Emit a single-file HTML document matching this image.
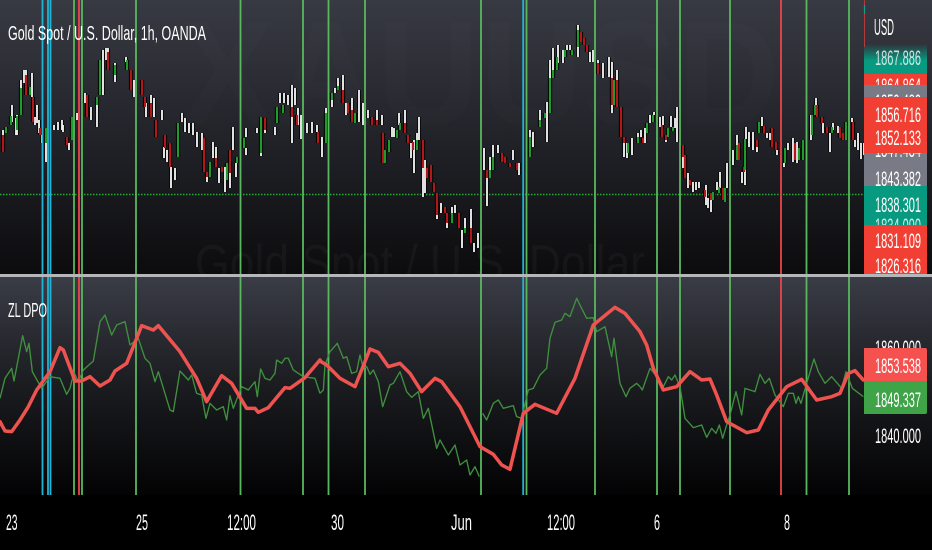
<!DOCTYPE html>
<html><head><meta charset="utf-8"><style>
html,body{margin:0;padding:0;background:#000;width:932px;height:550px;overflow:hidden}
svg{display:block;filter:blur(.35px)}
text{font-family:"Liberation Sans",sans-serif;fill:#fff}
.c{fill:none;stroke-linecap:butt}
</style></head><body>
<svg width="932" height="550" viewBox="0 0 932 550" xmlns="http://www.w3.org/2000/svg">
<defs>
<linearGradient id="g1" x1="0" y1="0" x2="0" y2="1"><stop offset="0" stop-color="#383a43"/><stop offset=".5" stop-color="#222329"/><stop offset="1" stop-color="#0c0c0e"/></linearGradient>
<linearGradient id="g2" x1="0" y1="0" x2="0" y2="1"><stop offset="0" stop-color="#3a3c46"/><stop offset=".5" stop-color="#1b1c20"/><stop offset="1" stop-color="#030304"/></linearGradient>
<linearGradient id="fade" x1="0" y1="0" x2="0" y2="1"><stop offset="0" stop-color="#089981" stop-opacity="0"/><stop offset=".55" stop-color="#089981"/><stop offset="1" stop-color="#089981"/></linearGradient>
<path id="wk" d="M3 130V137M12 105V122M16 118V135M17 115V135M21 80V88M24 70V83M26 70V75M32 73V97M37 105V123M35 117V125M39 120V133M42 135V143M46 143V162M54 125V130M58 122V130M62 120V130M63 125V132M69 143V150M77 113V120M85 93V103M91 107V120M97 97V127M103 50V95M106 48V60M108 48V53M115 63V82M126 57V62M134 80V97M146 103V117M151 95V103M154 98V117M162 110V120M164 147V158M167 150V162M171 167V188M175 168V180M182 113V122M185 118V132M189 123V133M193 123V135M197 132V147M202 133V150M207 175V182M213 142V158M216 147V158M219 168V183M225 167V192M230 173V188M233 127V150M236 163V177M246 128V137M246 148V155M257 128V133M261 150V156M265 127V133M275 127V135M280 93V103M284 93V103M288 95V105M292 85V143M295 88V105M298 108V125M301 115V139M307 123V133M312 122V133M317 125V132M322 137V157M326 108V113M332 100V107M335 88V93M338 78V86M343 75V90M346 103V115M352 98V113M359 90V122M363 103V125M368 110V118M377 110V120M382 115V125M392 127V137M394 128V137M399 113V125M405 110V123M411 143V158M414 140V173M417 133V150M419 117V140M423 168V197M425 160V193M437 215V219M441 203V213M447 223V228M452 207V213M455 205V213M462 230V248M465 218V228M471 209V228M474 243V252M478 233V248M484 148V170M487 178V206M490 157V170M493 145V157M498 145V153M513 150V160M519 163V175M530 130V137M533 132V147M540 110V120M547 102V142M550 60V78M553 48V70M558 45V63M563 50V63M567 45V50M570 45V50M578 47V57M578 25V30M590 52V62M593 50V62M598 60V63M603 63V78M609 57V77M612 62V78M617 70V80M612 105V113M624 143V157M627 143V158M632 138V155M638 133V137M641 130V137M645 128V143M650 115V123M654 112V115M660 117V127M663 116V125M666 140V142M671 116V127M675 118V128M677 107V142M683 157V168M688 173V188M693 182V192M696 182V190M699 182V188M706 185V205M708 198V208M711 200V212M717 182V190M720 172V188M727 163V188M733 150V165M737 135V145M742 172V183M745 170V185M746 127V139M749 132V147M753 132V150M757 147V152M762 117V126M767 133V138M770 133V140M777 150V155M784 163V167M788 143V150M793 138V162M797 142V163M811 115V140M816 98V105M823 123V133M830 133V152M833 123V130M838 126V133M852 118V122M855 140V147M858 133V150M861 143V159M864 143V155"/>
<path id="rb" d="M3 135V152M26 75V95M33 97V122M40 128V135M67 137V145M87 95V117M108 52V70M131 70V90M142 80V95M145 97V107M151 103V117M156 120V137M165 135V148M170 143V167M204 138V172M207 172V177M216 158V167M222 167V172M230 150V173M265 118V130M292 107V117M297 115V125M318 132V143M343 90V103M348 103V113M352 110V122M372 117V125M377 120V125M383 133V163M405 123V133M408 135V143M413 142V150M423 140V168M427 168V178M431 165V182M434 183V192M437 193V215M445 207V213M447 213V223M459 213V228M471 228V243M487 170V178M502 153V162M505 157V163M510 163V167M517 163V170M581 32V42M584 38V45M587 45V52M598 63V74M612 78V105M617 80V107M621 107V137M624 137V143M643 138V143M662 125V137M666 135V140M683 145V157M685 155V178M690 180V185M705 190V197M711 193V200M723 188V200M739 143V160M744 167V172M757 140V147M764 126V133M772 128V147M776 142V150M795 143V160M817 105V117M822 117V123M827 127V133M840 127V138M843 133V140M853 122V140"/>
<path id="gb" d="M6 127V133M11 116V125M17 116V130M21 88V115M30 87V95M46 128V143M72 117V140M97 97V105M100 60V95M115 65V75M127 60V70M178 123V157M210 162V177M227 163V180M237 157V163M244 138V148M261 117V153M277 107V123M283 105V113M326 113V143M332 93V100M338 86V90M355 113V123M385 150V163M389 140V152M397 130V138M400 123V130M417 140V150M452 213V223M465 228V233M490 170V178M493 157V170M530 137V157M540 120V127M545 113V118M550 78V113M553 70V78M557 57V70M565 50V57M572 50V55M578 30V47M614 80V105M628 143V153M638 137V143M647 123V133M653 115V122M668 128V137M673 127V131M713 192V200M719 187V193M725 188V202M737 145V160M745 139V170M759 122V133M785 148V163M799 148V160M803 140V160M812 115V135M815 105V115M832 127V133M846 122V140"/>
<clipPath id="top"><rect x="0" y="0" width="864" height="274"/></clipPath>
<clipPath id="k1"><rect x="864" y="74" width="63" height="11"/></clipPath>
<clipPath id="k2"><rect x="864" y="85" width="63" height="12"/></clipPath>
<clipPath id="k3"><rect x="864" y="153" width="63" height="33"/></clipPath>
<clipPath id="k4"><rect x="864" y="218" width="63" height="7"/></clipPath>
<clipPath id="k5"><rect x="864" y="335" width="63" height="13"/></clipPath>
</defs>
<rect width="932" height="550" fill="#000"/>
<rect width="932" height="274" fill="url(#g1)"/>
<rect y="277" width="932" height="218" fill="url(#g2)"/>

<g clip-path="url(#top)">
<text x="180" y="125" font-size="150" font-weight="700" textLength="600" lengthAdjust="spacingAndGlyphs" style="fill:#fff;fill-opacity:.012">XAUUSD</text>
<text x="195" y="280" font-size="50" textLength="450" lengthAdjust="spacingAndGlyphs" style="fill:#fff;fill-opacity:.035">Gold Spot / U.S. Dollar</text>
</g>

<path d="M0 194.5H864" stroke="#22ad30" stroke-width="1.6" stroke-dasharray="1.5 1.5" fill="none"/>

<g clip-path="url(#top)">
<use href="#wk" class="c" stroke="#000" stroke-width="3.4"/>
<use href="#rb" class="c" stroke="#000" stroke-width="4.2"/>
<use href="#gb" class="c" stroke="#000" stroke-width="4.2"/>
<use href="#wk" class="c" stroke="#ececec" stroke-width="1.9"/>
<use href="#rb" class="c" stroke="#b2181b" stroke-width="2.2"/>
<use href="#gb" class="c" stroke="#1f9a2c" stroke-width="2.2"/>
</g>

<!-- vertical markers -->
<g fill="none" stroke-width="1.8">
<path stroke="#59b75d" d="M74 0V274M74 277V495M82 0V274M82 277V495M136 0V274M136 277V495M240.5 0V274M240.5 277V495M303 0V274M303 277V495M328.500 0V274M328.500 277V495M365 0V274M365 277V495M481 0V274M481 277V495M526.500 0V274M526.500 277V495M595 0V274M595 277V495M657 0V274M657 277V495M680 0V274M680 277V495M730 0V274M730 277V495M806.500 0V274M806.500 277V495M849 0V274M849 277V495"/>
<path stroke="#22b4d6" d="M42.500 0V274M42.500 277V495M48 0V274M48 277V495M50.500 0V274M50.500 277V495M523.200 0V274M523.200 277V495"/>
<path stroke="#ec4449" d="M79 0V274M79 277V495M781 0V274M781 277V495"/>
</g>

<!-- green (thin) line -->
<g fill="none" stroke="#40913f" stroke-width="4" stroke-linejoin="round">
<polyline transform="translate(0,275) scale(.3333)" points="0,370 15,310 35,280 42,318 68,182 80,230 87,205 97,290 125,340 150,305 180,310 200,358 210,340 222,292 235,320 250,285 280,258 300,140 315,120 335,180 350,150 375,140 390,210 415,190 435,250 450,265 465,320 475,290 510,405 520,410 540,288 565,315 575,300 590,355 605,360 618,430 630,385 650,405 670,395 680,435 690,362 700,400 725,335 745,345 765,320 772,365 782,282 795,310 810,315 825,295 830,255 845,265 855,250 865,250 880,285 910,305 945,310 960,355"/>
<polyline transform="translate(320,275) scale(.3333)" points="0,355 10,345 15,270 30,230 52,205 70,250 80,245 95,295 110,290 120,240 130,280 140,275 150,298 160,285 175,320 188,395 210,330 220,325 240,290 260,350 275,367 295,350 310,430 325,400 350,520 360,495 385,540 405,510 420,570 440,555 450,600 465,575 478,605"/>
<polyline transform="translate(320,275) scale(.3333)" points="488,415 500,435 520,385 535,375 550,400 580,392 590,425 605,430 625,345 640,340 660,300 680,280 690,190 705,142 725,135 735,115 750,125 770,70 800,130 820,128 830,170 855,155 875,245 882,190 900,325 918,365 930,340 950,325 960,335"/>
<polyline transform="translate(640,275) scale(.3333)" points="0,335 7,345 30,280 55,310 70,335 85,305 95,315 105,300 120,335 135,430 160,458 185,450 200,487 215,460 228,475 238,450 248,490 260,450 270,420 288,350 305,420 315,340 345,350 360,298 375,325 388,310 405,360 430,395 445,355 460,355 468,385 475,365 483,385 500,325 522,252 535,290 555,325 575,305 605,340 618,290 637,340 670,365"/>
</g>
<!-- red (thick) line -->
<g fill="none" stroke="#ef5350" stroke-width="10.500" stroke-linejoin="round" stroke-linecap="round">
<polyline transform="translate(0,275) scale(.3333)" points="0,440 15,468 35,470 60,435 85,395 110,345 150,290 180,218 190,225 225,318 245,318 270,305 300,333 330,315 345,288 380,265 425,152 460,165 475,152 540,230 590,310 620,380 665,302 695,325 740,400 765,400 775,412 805,398 855,338 870,340 915,308 960,255"/>
<polyline transform="translate(320,275) scale(.3333)" points="0,258 20,270 60,310 105,335 150,222 175,232 205,275 240,265 270,295 305,350 345,310 365,320 420,395 480,515 520,538 545,570 570,583 610,415 645,388 710,415 765,310 820,150 885,97 915,115 960,170"/>
<polyline transform="translate(640,275) scale(.3333)" points="0,170 20,210 40,280 70,345 110,335 150,290 185,315 210,312 230,360 260,440 320,473 355,465 385,405 440,335 485,313 530,375 575,365 600,355 625,295 645,287 670,315"/>
</g>

<!-- separator -->
<rect y="274" width="932" height="3" fill="#b5b7bb"/>

<!-- legends -->
<text x="8" y="40" font-size="20" textLength="198" lengthAdjust="spacingAndGlyphs">Gold Spot / U.S. Dollar, 1h, OANDA</text>
<text x="8" y="317" font-size="20" textLength="39" lengthAdjust="spacingAndGlyphs">ZL DPO</text>

<!-- price axis -->
<path d="M864.500 0V47" stroke="#b23a3c" stroke-width="1"/>
<path d="M864.500 5V14" stroke="#1c9a88" stroke-width="1.200"/>
<text x="874" y="35" font-size="23" textLength="20" lengthAdjust="spacingAndGlyphs">USD</text>
<rect x="864" y="44" width="63" height="30" fill="url(#fade)"/>
<rect x="864" y="74" width="63" height="11" fill="#f23f33"/>
<rect x="864" y="85" width="63" height="12" fill="#787b86"/>
<rect x="864" y="97" width="63" height="56" fill="#f23f33"/>
<rect x="864" y="153" width="63" height="33" fill="#787b86"/>
<rect x="864" y="186" width="63" height="39" fill="#089981"/>
<rect x="864" y="225" width="63" height="49" fill="#f23f33"/>
<g font-size="21">
<g clip-path="url(#k1)"><text x="875" y="93" textLength="46" lengthAdjust="spacingAndGlyphs">1864.864</text></g>
<g clip-path="url(#k2)"><text x="875" y="109" textLength="46" lengthAdjust="spacingAndGlyphs">1859.480</text></g>
<g clip-path="url(#k3)"><text x="875" y="157" textLength="46" lengthAdjust="spacingAndGlyphs">1847.434</text></g>
<g clip-path="url(#k4)"><text x="875" y="233" textLength="46" lengthAdjust="spacingAndGlyphs" fill-opacity=".8">1834.090</text></g>
<text x="875" y="65" textLength="46" lengthAdjust="spacingAndGlyphs" fill-opacity=".8">1867.886</text>
<text x="875" y="122" textLength="46" lengthAdjust="spacingAndGlyphs">1856.716</text>
<text x="875" y="145" textLength="46" lengthAdjust="spacingAndGlyphs">1852.133</text>
<text x="875" y="186" textLength="46" lengthAdjust="spacingAndGlyphs">1843.382</text>
<text x="875" y="212" textLength="46" lengthAdjust="spacingAndGlyphs">1838.301</text>
<text x="875" y="248" textLength="46" lengthAdjust="spacingAndGlyphs">1831.109</text>
<text x="875" y="273" textLength="46" lengthAdjust="spacingAndGlyphs">1826.316</text>
<g clip-path="url(#k5)"><text x="875" y="355" textLength="46" lengthAdjust="spacingAndGlyphs">1860.000</text></g>
</g>
<path d="M864 348H925a2 2 0 0 1 2 2V381H864Z" fill="#f4514f"/>
<path d="M864 381H927V412a2 2 0 0 1-2 2H864Z" fill="#3fa348"/>
<g font-size="21">
<text x="875" y="373" textLength="46" lengthAdjust="spacingAndGlyphs">1853.538</text>
<text x="875" y="407" textLength="46" lengthAdjust="spacingAndGlyphs">1849.337</text>
<text x="875" y="443" textLength="46" lengthAdjust="spacingAndGlyphs">1840.000</text>
</g>

<!-- time axis -->
<g font-size="22">
<text x="6" y="530" textLength="11.500" lengthAdjust="spacingAndGlyphs">23</text>
<text x="136" y="530" textLength="12" lengthAdjust="spacingAndGlyphs">25</text>
<text x="227" y="530" textLength="29" lengthAdjust="spacingAndGlyphs">12:00</text>
<text x="331" y="530" textLength="13" lengthAdjust="spacingAndGlyphs">30</text>
<text x="451" y="530" textLength="21" lengthAdjust="spacingAndGlyphs">Jun</text>
<text x="547" y="530" textLength="28" lengthAdjust="spacingAndGlyphs">12:00</text>
<text x="654" y="530" textLength="6" lengthAdjust="spacingAndGlyphs">6</text>
<text x="784" y="530" textLength="6" lengthAdjust="spacingAndGlyphs">8</text>
</g>
</svg>
</body></html>
